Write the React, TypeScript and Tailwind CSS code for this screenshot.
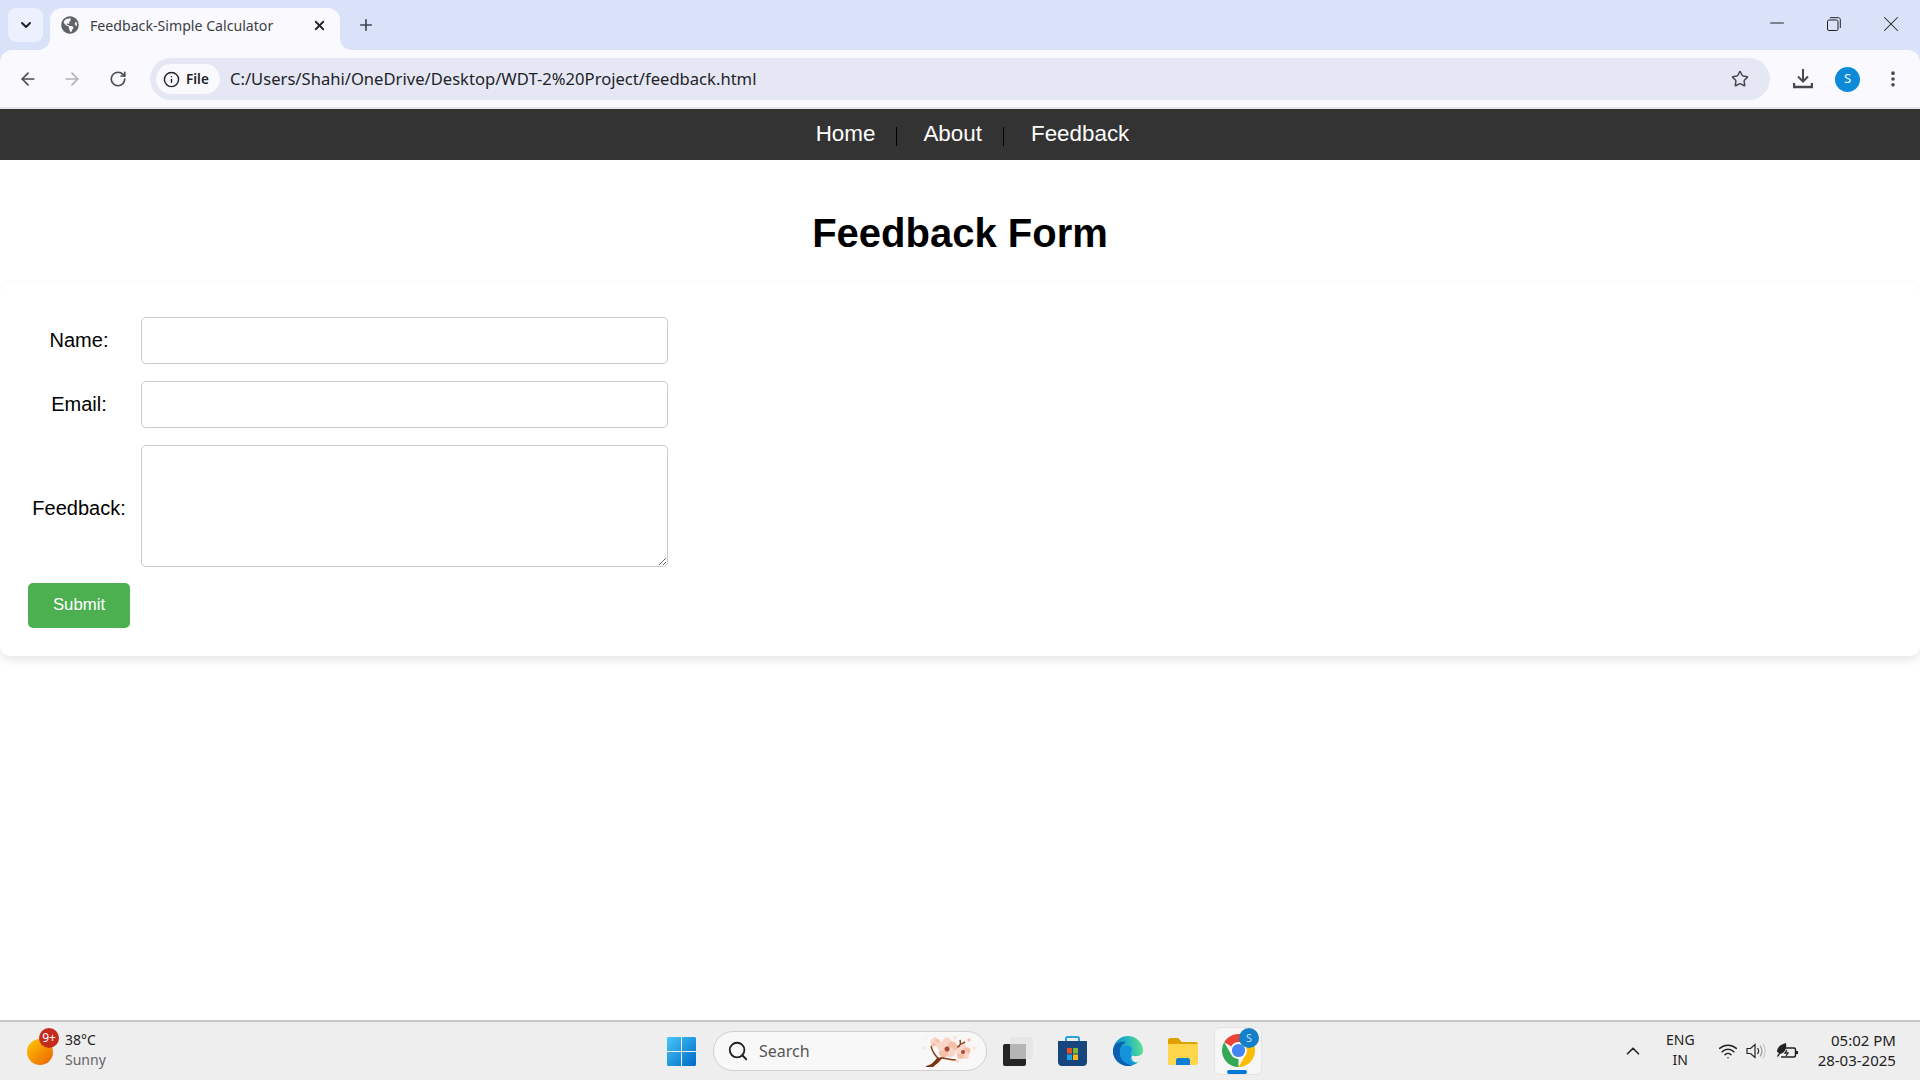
import { ArrowLeft, ArrowRight, ChevronDown, ChevronUp, Info, Minus, MoreVertical, Plus, RotateCw, Search, Star, Wifi, X } from "lucide-react";
import { FaGlobeAmericas } from "react-icons/fa";

const ui = "font-['Noto_Sans','Open_Sans',sans-serif]";
const web = "font-['Liberation_Sans',Arial,sans-serif]";

const TabCorner = ({ flip }: { flip?: boolean }) => (
  <svg width="12" height="12" viewBox="0 0 12 12" className={flip ? "absolute bottom-0 -right-3" : "absolute bottom-0 -left-3"}>
    <path d={flip ? "M0 0C0 7 5 12 12 12H0Z" : "M12 0C12 7 7 12 0 12H12Z"} fill="#f9f9fe" />
  </svg>
);

const ChromeLogo = () => (
  <svg width="33" height="33" viewBox="4 4 40 40">
    <path d="M6.68 14A20 20 0 0 1 41.32 14H24A10 10 0 0 0 15.34 19Z" fill="#ea4335" />
    <path d="M6.68 14L15.34 29A10 10 0 0 0 24 34L24 44A20 20 0 0 1 6.68 14Z" fill="#34a853" />
    <path d="M41.32 14H24A10 10 0 0 1 32.66 29L24 44A20 20 0 0 0 41.32 14Z" fill="#fbbc04" />
    <circle cx="24" cy="24" r="10" fill="#fff" />
    <circle cx="24" cy="24" r="8" fill="#4285f4" />
  </svg>
);

const flower = (cx: number, cy: number, r: number) =>
  [0, 72, 144, 216, 288].map((deg) => {
    const a = (deg * Math.PI) / 180;
    return <circle key={`${cx}-${deg}`} cx={cx + Math.sin(a) * r * 0.6} cy={cy - Math.cos(a) * r * 0.6} r={r * 0.5} fill={deg % 144 === 0 ? "#fad6c6" : "#f6bfa9"} />;
  });

const Blossom = () => (
  <svg width="55" height="34" viewBox="0 0 55 34">
    <circle cx="33" cy="2.500" r="2" fill="#fbe3dc" />
    <circle cx="1.500" cy="13" r="1.500" fill="#fbe3dc" />
    <circle cx="52" cy="13" r="1.800" fill="#fbe3dc" />
    <circle cx="3.500" cy="3" r="1" fill="#fbe3dc" />
    <path d="M17 24C12 20 10 15 9 11M19 23C24 23 28 25 34 25M21 22C28 19 34 12 43 7M36 13C38 11 39 8 38 5" stroke="#8a4018" strokeWidth="1.500" fill="none" />
    <path d="M4 31C9 30 12 27 15 23L21 22L17 27L11 32H4Z" fill="#7b3413" />
    {flower(13, 7, 4.500)}
    {flower(25, 13, 9.500)}
    <circle cx="25" cy="14" r="2.500" fill="#a8493a" />
    {flower(41, 17, 7)}
    <circle cx="41" cy="17" r="2" fill="#a8493a" />
    <circle cx="47" cy="5" r="1.800" fill="#f6bfa9" />
    <circle cx="35" cy="26" r="1.800" fill="#fad6c6" />
  </svg>
);

const TaskView = () => (
  <svg width="30" height="30" viewBox="0 0 30 30">
    <rect x="0" y="8" width="23" height="22" rx="2" fill="#252525" />
    <rect x="7" y="1" width="23" height="22" rx="2" fill="#e6e6e6" />
    <rect x="7" y="8" width="16" height="15" fill="#b5b5b5" />
  </svg>
);

const StoreIcon = () => (
  <svg width="29" height="30" viewBox="0 0 29 30">
    <path d="M8 6V2.500C8 1.500 8.500 1 9.500 1H19.500C20.500 1 21 1.500 21 2.500V6" stroke="#2aa0e8" strokeWidth="2" fill="none" />
    <path d="M0 5H29V26C29 28.500 27.500 30 25 30H4C1.500 30 0 28.500 0 26Z" fill="#17467f" />
    <rect x="9" y="12" width="5" height="5.500" fill="#e8512c" />
    <rect x="15" y="12" width="5" height="5.500" fill="#7cb82f" />
    <rect x="9" y="18.500" width="5" height="5.500" fill="#1ba1e2" />
    <rect x="15" y="18.500" width="5" height="5.500" fill="#f9b712" />
  </svg>
);

const EdgeIcon = () => (
  <svg width="30" height="30" viewBox="0 0 30 30">
    <defs>
      <linearGradient id="edgeTop" x1="0" y1="0.500" x2="1" y2="0.300">
        <stop offset="0" stopColor="#0c7fd0" />
        <stop offset="0.500" stopColor="#1fb5c4" />
        <stop offset="1" stopColor="#63e08a" />
      </linearGradient>
    </defs>
    <circle cx="15" cy="15" r="15" fill="url(#edgeTop)" />
    <path d="M0 15C0 8 7 5 13 6C9 8 6 12 7 18C8 24 14 29 20 29C18 30 16 30 15 30C7 30 0 23 0 15Z" fill="#0a5fb0" />
    <path d="M7 18C7 11 12 9 16 10C19 11 20 14 18 16C17 17 17 19 19 20C15 22 17 27 24 27C20 30 14 29 10 25C8 23 7 21 7 18Z" fill="#1692dc" />
    <path d="M30 16C29 20 23 21 19 19.500C18 22 19 25 22 26C25 27 28 24 30 20Z" fill="#eeeeee" />
  </svg>
);

const FolderIcon = () => (
  <svg width="30" height="27" viewBox="0 0 30 27">
    <path d="M0 2C0 .8.800 0 2 0H10L14 4H28C29 4 30 5 30 6V9H0Z" fill="#dfa100" />
    <path d="M0 6H30V25C30 26 29 27 28 27H2C1 27 0 26 0 25Z" fill="#fdd64b" />
    <path d="M8 27V22C8 21 9 20 10 20H20C21 20 22 21 22 22V27Z" fill="#0f7fd4" />
  </svg>
);

const WinLogo = () => (
  <svg width="29" height="29" viewBox="0 0 29 29">
    <defs>
      <linearGradient id="winBlue" x1="0" y1="0" x2="1" y2="1">
        <stop offset="0" stopColor="#45c8f7" />
        <stop offset="1" stopColor="#0069c8" />
      </linearGradient>
    </defs>
    <path d="M0 1.500C0 .6.600 0 1.500 0H14V14H0ZM15 0H27.500C28.400 0 29 .6 29 1.500V14H15ZM0 15H14V29H1.500C.6 29 0 28.400 0 27.500ZM15 15H29V27.500C29 28.400 28.400 29 27.500 29H15Z" fill="url(#winBlue)" />
  </svg>
);

const SpeakerIcon = () => (
  <svg width="21" height="18" viewBox="0 0 21 18" fill="none" strokeWidth="1.200">
    <path d="M1 6.500H4.500L9 2.500V15.500L4.500 11.500H1Z" stroke="#222" />
    <path d="M11.500 6C13 8 13 10 11.500 12" stroke="#222" />
    <path d="M14 3.500C16.500 7 16.500 11 14 14.500" stroke="#9a9a9a" />
    <path d="M16.800 1.500C20 6 20 12 16.800 16.500" stroke="#c8c8c8" />
  </svg>
);

const BatteryLeaf = () => (
  <svg width="21" height="16" viewBox="0 0 21 16">
    <path d="M7 5H17C18 5 18.500 5.500 18.500 6.500V12C18.500 13 18 14 17 14H4" stroke="#222" strokeWidth="1.500" fill="none" />
    <rect x="19" y="8" width="2" height="3" fill="#222" />
    <path d="M0 9C0 3 5 1 9 0C10 5 8 10 3 11L1 14L0 13L2 10Z" fill="#222" />
    <path d="M10 7L8 10H11L9 13" stroke="#222" strokeWidth="1.300" fill="none" />
  </svg>
);

const DownloadIcon = () => (
  <svg width="20" height="20" viewBox="0 0 20 20" fill="none" stroke="#47494f" strokeWidth="2">
    <path d="M10 0V12M5 7.500L10 12.500L15 7.500" />
    <path d="M1 14V18H19V14" strokeWidth="2.400" />
  </svg>
);

const RestoreIcon = () => (
  <svg width="14" height="14" viewBox="0 0 14 14" fill="none" stroke="#222" strokeWidth="1">
    <rect x=".5" y="3" width="10.500" height="10.500" rx="1.500" />
    <path d="M3 .7H11.500C12.500 .7 13.300 1.500 13.300 2.500V11" />
  </svg>
);

const BrowserChrome = () => (
  <div className={`${ui} shrink-0`}>
    <div className="flex h-[50px] bg-[#d9e2f8]">
      <div className="mt-2 ml-2 flex h-[34px] w-[35px] items-center justify-center rounded-lg bg-[#ecf1fd]">
        <ChevronDown size={16} strokeWidth={3} className="text-[#1f2329]" />
      </div>
      <div className="relative mt-2 ml-[7px] flex h-[42px] w-[290px] items-start rounded-t-xl bg-[#f9f9fe] pt-2 pl-[11px]">
        <TabCorner />
        <FaGlobeAmericas size={18} className="text-[#5f6368]" />
        <span className="ml-[11px] text-[14.150px] leading-[19px] text-[#3c4043]">Feedback-Simple Calculator</span>
        <X size={15} strokeWidth={3} className="mt-[2px] ml-[39px] text-[#25272b]" />
        <TabCorner flip />
      </div>
      <Plus size={18} strokeWidth={2.2} className="mt-4 ml-[17px] text-[#3f444d]" />
      <div className="ml-auto flex items-start pr-[16px]">
        <Minus size={22} strokeWidth={1.100} className="mt-[12px] text-[#222]" />
        <div className="mt-[17px] ml-[39px]"><RestoreIcon /></div>
        <X size={26} strokeWidth={0.950} className="mt-[11px] ml-[37px] text-[#222]" />
      </div>
    </div>
    <div className="h-[59px] bg-[#d9e2f8]">
      <div className="flex h-[59px] items-center rounded-t-xl border-b-2 border-[#e6e6f0] bg-[#f9f9fe] pt-px">
        <ArrowLeft size={20} strokeWidth={2} className="ml-[18px] text-[#474b53]" />
        <ArrowRight size={20} strokeWidth={2} className="ml-6 text-[#b0b2b8]" />
        <RotateCw size={18} strokeWidth={2.2} className="ml-[27px] text-[#474b53]" />
        <div className="ml-[23px] flex h-[42px] w-[1620px] items-center rounded-full bg-[#e5e8f4]">
          <div className="ml-[6px] flex h-[30px] w-[64px] items-center rounded-full bg-[#f9f9fe] pl-[7px]">
            <Info size={17} strokeWidth={2} className="text-[#1f2329]" />
            <span className="ml-[6px] text-[13.500px] font-semibold text-[#1f2329]">File</span>
          </div>
          <span className="ml-[10px] text-[16.600px] whitespace-nowrap text-[#1f2329]">C:/Users/Shahi/OneDrive/Desktop/WDT-2%20Project/feedback.html</span>
          <Star size={18} strokeWidth={2} className="mr-[21px] ml-auto text-[#47494f]" />
        </div>
        <div className="ml-[23px]"><DownloadIcon /></div>
        <div className="ml-[22px] flex h-[25px] w-[25px] items-center justify-center rounded-full bg-[#0b8ad8] text-[13px] text-white">S</div>
        <MoreVertical size={20} strokeWidth={2.400} className="ml-[23px] text-[#47494f]" />
      </div>
    </div>
  </div>
);

const FeedbackPage = () => (
  <div className={`${web} min-h-0 flex-1 bg-white`}>
    <nav className="flex h-[51px] items-start justify-center bg-[#333] pt-[11px] pl-[25px] text-[22.400px] leading-[28px] text-white">
      <a>Home</a>
      <span className="mt-[7px] ml-[21px] h-[19px] w-px bg-black" />
      <a className="ml-[26px]">About</a>
      <span className="mt-[7px] ml-[21px] h-[19px] w-px bg-black" />
      <a className="ml-[27px]">Feedback</a>
    </nav>
    <h1 className="mt-[49px] text-center text-[40px] leading-[48px] font-bold text-black">Feedback Form</h1>
    <form className="mt-[26px] h-[373px] rounded-[10px] bg-white px-7 pt-[34px] shadow-[0_4px_10px_rgba(0,0,0,0.1)]">
      <div className="grid grid-cols-[102px_527px] items-center gap-x-[11px] gap-y-[17px] text-[20px] text-black">
        <label className="-mt-[2px] text-center">Name:</label>
        <input type="text" className="h-[47px] rounded-[5px] border border-[#ccc] bg-white" />
        <label className="-mt-[2px] text-center">Email:</label>
        <input type="email" className="h-[47px] rounded-[5px] border border-[#ccc] bg-white" />
        <label className="mt-[4px] text-center">Feedback:</label>
        <textarea className="h-[122px] rounded-[5px] border border-[#ccc] bg-white" />
      </div>
      <button type="button" className="mt-4 h-[45px] w-[102px] rounded-[5px] bg-[#4caf50] pb-[2px] text-[16.800px] text-white">Submit</button>
    </form>
  </div>
);

const Taskbar = () => (
  <div className={`${ui} flex h-[60px] shrink-0 items-center border-t-2 border-[#c6c6c6] bg-[#eeeeee]`}>
    <div className="flex w-[667px] shrink-0 items-center pl-[27px]">
      <div className="relative mt-[2px] h-[26px] w-[26px] rounded-full bg-gradient-to-br from-[#ffc800] to-[#e85d04]">
        <span className="absolute -top-[11px] left-[12px] flex h-5 w-5 items-center justify-center rounded-full bg-[#c42b1c] text-[12px] text-white">9+</span>
      </div>
      <div className="ml-3 -mt-[2px] text-[14px] leading-5">
        <div className="text-[#222]">38°C</div>
        <div className="text-[#666]">Sunny</div>
      </div>
    </div>
    <WinLogo />
    <div className="ml-[17px] flex h-10 w-[274px] items-center rounded-full border border-[#d0d0d0] bg-[#f8f8f8] pl-[13px]">
      <Search size={22} strokeWidth={2} className="text-[#222]" />
      <span className="ml-[10px] text-[16px] text-[#555]">Search</span>
      <div className="mt-[2px] ml-[112px]"><Blossom /></div>
    </div>
    <div className="ml-4"><TaskView /></div>
    <div className="ml-[25px]"><StoreIcon /></div>
    <div className="ml-[26px]"><EdgeIcon /></div>
    <div className="ml-[25px]"><FolderIcon /></div>
    <div className="relative ml-4 flex h-12 w-12 items-start justify-center rounded-md border border-[#e4e4e4] bg-[#f6f6f6] pt-[6px]">
      <ChromeLogo />
      <span className="absolute top-0 right-[2px] flex h-5 w-5 items-center justify-center rounded-full bg-[#1380c8] text-[11px] text-[#bde0f7]">S</span>
      <span className="absolute right-[14px] bottom-0 h-1 w-5 rounded-full bg-[#0078d4]" />
    </div>
    <ChevronUp size={22} strokeWidth={1.800} className="ml-[360px] text-[#222]" />
    <div className="ml-[22px] -mt-[2px] text-center text-[14px] leading-5 text-[#222]">
      <div>ENG</div>
      <div>IN</div>
    </div>
    <Wifi size={20} strokeWidth={1.800} className="ml-[23px] text-[#222]" />
    <div className="ml-[8px]"><SpeakerIcon /></div>
    <div className="ml-[10px]"><BatteryLeaf /></div>
    <div className="ml-[20px] -mt-[2px] text-right text-[15px] leading-5 text-[#222]">
      <div>05:02 PM</div>
      <div>28-03-2025</div>
    </div>
  </div>
);

export default function App() {
  return (
    <div className="flex h-screen flex-col overflow-hidden bg-white">
      <BrowserChrome />
      <FeedbackPage />
      <Taskbar />
    </div>
  );
}
